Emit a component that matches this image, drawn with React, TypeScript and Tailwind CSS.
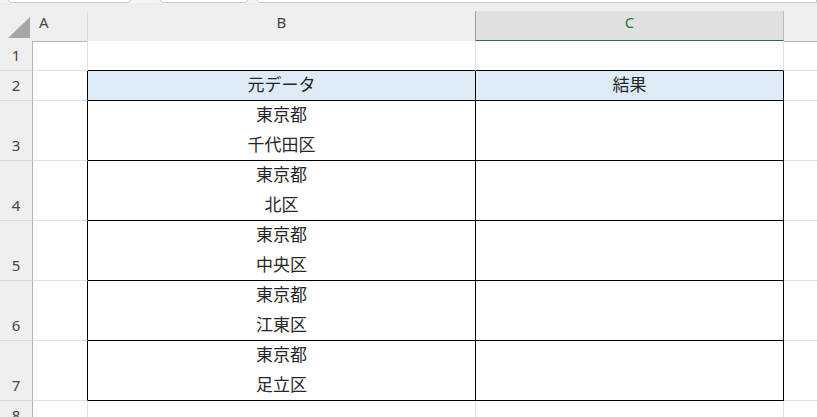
import React from "react";

const font = { jp: "font-['Noto_Sans_CJK_JP',sans-serif]" };

type Row = {
  no: number;
  h: string;
  b?: string[];
  c?: string[];
  head?: boolean;
  boxed?: boolean;
};

const rows: Row[] = [
  { no: 1, h: "h-[30px]" },
  { no: 2, h: "h-[30px]", b: ["元データ"], c: ["結果"], head: true, boxed: true },
  { no: 3, h: "h-[60px]", b: ["東京都", "千代田区"], boxed: true },
  { no: 4, h: "h-[60px]", b: ["東京都", "北区"], boxed: true },
  { no: 5, h: "h-[60px]", b: ["東京都", "中央区"], boxed: true },
  { no: 6, h: "h-[60px]", b: ["東京都", "江東区"], boxed: true },
  { no: 7, h: "h-[60px]", b: ["東京都", "足立区"], boxed: true },
  { no: 8, h: "h-[30px]" },
];

function CellText({ lines }: { lines?: string[] }) {
  if (!lines) return null;
  return (
    <div className="flex h-full flex-col items-center justify-center pb-[4px]">
      {lines.map((t) => (
        <span key={t} className={`${font.jp} text-[17px] leading-[30px] text-[#262626]`}>
          {t}
        </span>
      ))}
    </div>
  );
}

export default function App() {
  return (
    <div className="h-[417px] w-[817px] overflow-hidden bg-white font-['Noto_Sans',sans-serif]">
      {/* tab strip */}
      <div className="flex h-[3px] overflow-hidden bg-[#f5f5f5]">
        <div className="ml-[7px] -mt-[6px] h-[9px] w-[125px] rounded-b-[5px] border border-[#c9c9c9] bg-white" />
        <div className="ml-[27px] -mt-[6px] h-[9px] w-[90px] rounded-b-[5px] border border-[#c9c9c9] bg-white" />
        <div className="ml-[7px] -mt-[6px] h-[9px] flex-1 rounded-bl-[5px] border border-[#c9c9c9] bg-white" />
      </div>

      {/* column headers */}
      <div className="bg-[#efefef] pt-[8px]">
        <div className="grid h-[30px] grid-cols-[33px_55px_388px_308px_1fr] text-[15px] text-[#444]">
          <div className="flex items-end justify-end border-b border-[#b4b4b4] pb-[3px] pr-[3px]">
            <svg width="22" height="21" viewBox="0 0 22 21">
              <polygon points="22,0 22,21 0,21" fill="#a6a6a6" />
            </svg>
          </div>
          <div className="flex items-center border-b border-r border-b-[#b4b4b4] border-r-[#dcdcdc] pb-[7px] pl-[6px]">
            A
          </div>
          <div className="flex items-center justify-center border-b border-r border-b-[#b4b4b4] border-r-[#9f9f9f] pb-[7px]">
            B
          </div>
          <div className="flex items-center justify-center border-b-2 border-r border-b-[#1e7145] border-r-[#bdbdbd] bg-[#e1e1e1] pb-[6px] text-[#1e7145]">
            C
          </div>
          <div className="border-b border-[#b4b4b4]" />
        </div>
      </div>

      {/* body */}
      <div className="grid grid-cols-[33px_55px_388px_308px_1fr]">
        {rows.map((r) => {
          const edge = r.boxed ? "border-r-black" : "border-r-[#e1e1e1]";
          const bottom = r.no <= 7 ? "border-b-black" : "border-b-[#e1e1e1]";
          const fill = r.head ? "bg-[#ddebf7]" : "bg-white";
          return (
            <React.Fragment key={r.no}>
              <div
                className={`${r.h} flex items-end justify-center border-b border-r border-b-[#dadada] border-r-[#b4b4b4] bg-[#efefef] text-[15px] text-[#444]`}
              >
                <span className="leading-[30px]">{r.no}</span>
              </div>
              <div className={`${r.h} border-b border-r border-b-[#e1e1e1] ${edge}`} />
              <div className={`${r.h} border-b border-r ${bottom} ${edge} ${fill}`}>
                <CellText lines={r.b} />
              </div>
              <div className={`${r.h} border-b border-r ${bottom} ${edge} ${fill}`}>
                <CellText lines={r.c} />
              </div>
              <div className={`${r.h} border-b border-b-[#e1e1e1]`} />
            </React.Fragment>
          );
        })}
      </div>
    </div>
  );
}
